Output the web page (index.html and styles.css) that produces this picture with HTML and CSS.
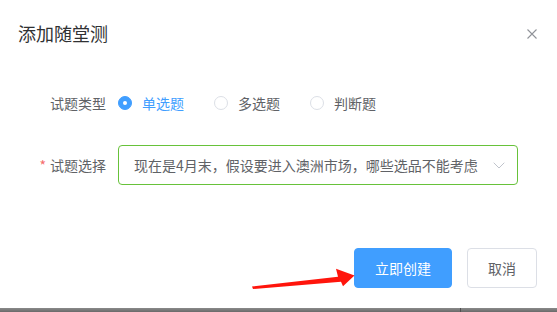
FILE: index.html
```html
<!DOCTYPE html>
<html lang="zh">
<head>
<meta charset="utf-8">
<link rel="stylesheet" href="styles.css">
</head>
<body>
<div class="dialog">
  <div class="header">
    <span class="title">添加随堂测</span>
    <svg class="close" width="10" height="10" viewBox="0 0 10 10"><path d="M0.5 0.5 L9.5 9.5 M9.5 0.5 L0.5 9.5" stroke="#909399" stroke-width="1.1" fill="none"/></svg>
  </div>
  <div class="form">
    <div class="form-item">
      <label class="label">试题类型</label>
      <div class="radios">
        <span class="radio checked"><span class="circle"></span><span class="rtext">单选题</span></span>
        <span class="radio"><span class="circle"></span><span class="rtext">多选题</span></span>
        <span class="radio"><span class="circle"></span><span class="rtext">判断题</span></span>
      </div>
    </div>
    <div class="form-item">
      <label class="label"><span class="req">*</span>试题选择</label>
      <div class="select">
        <span class="value">现在是4月末，假设要进入澳洲市场，哪些选品不能考虑</span>
        <svg class="chev" width="12" height="7" viewBox="0 0 12 7"><path d="M0.7 0.7 L6 6 L11.3 0.7" stroke="#C0C4CC" stroke-width="1" fill="none"/></svg>
      </div>
    </div>
  </div>
  <div class="footer">
    <button class="btn primary">立即创建</button>
    <button class="btn">取消</button>
  </div>
  <div class="strip"><span class="strip-a"></span><span class="strip-div"></span><span class="strip-b"></span></div>
</div>
<svg class="arrow" width="557" height="312" viewBox="0 0 557 312"><polygon points="252,286.5 338,276.8 336,268.8 354.5,275.5 343,286.2 341,281.8 253,289" fill="#FF150C"/></svg>
</body>
</html>
```

FILE: styles.css
```css
html, body {
  margin: 0;
  padding: 0;
}
body {
  width: 557px;
  height: 312px;
  overflow: hidden;
  background: #fff;
  position: relative;
  font-family: "Noto Sans CJK SC", "Noto Sans", sans-serif;
}
.dialog {
  height: 312px;
  display: flex;
  flex-direction: column;
}
.header {
  display: flex;
  justify-content: space-between;
  align-items: center;
  padding: 21px 20px 0 18px;
  height: 24px;
}
.title {
  font-size: 18px;
  line-height: 24px;
  color: #303133;
}
.close {
  display: block;
  margin-top: 1px;
}
.form {
  padding: 38px 18px 0 18px;
}
.form-item {
  display: flex;
  align-items: center;
  height: 40px;
  margin-bottom: 22px;
}
.label {
  width: 100px;
  box-sizing: border-box;
  padding-right: 12px;
  text-align: right;
  font-size: 14px;
  color: #606266;
}
.req {
  color: #F56C6C;
  margin-right: 4px;
}
.radios {
  display: flex;
  align-items: center;
}
.radio {
  display: flex;
  align-items: center;
  margin-right: 30px;
  font-size: 14px;
  color: #606266;
}
.circle {
  width: 14px;
  height: 14px;
  box-sizing: border-box;
  border: 1px solid #DCDFE6;
  border-radius: 50%;
  background: #fff;
  position: relative;
}
.radio.checked .circle {
  background: #409EFF;
  border-color: #409EFF;
}
.radio.checked .circle::after {
  content: "";
  position: absolute;
  left: 50%;
  top: 50%;
  width: 4px;
  height: 4px;
  margin: -2px 0 0 -2px;
  border-radius: 50%;
  background: #fff;
}
.rtext {
  padding-left: 10px;
}
.radio.checked .rtext {
  color: #409EFF;
}
.select {
  width: 400px;
  height: 40px;
  box-sizing: border-box;
  border: 1px solid #67C23A;
  border-radius: 4px;
  padding: 0 12px 0 15px;
  display: flex;
  align-items: center;
  justify-content: space-between;
}
.value {
  font-size: 14px;
  color: #606266;
  white-space: nowrap;
  overflow: hidden;
}
.chev {
  display: block;
  margin-left: 12px;
  flex: none;
}
.footer {
  display: flex;
  justify-content: flex-end;
  gap: 15px;
  padding: 41px 20px 0 0;
}
.btn {
  height: 40px;
  padding: 0 20px;
  border: 1px solid #DCDFE6;
  border-radius: 4px;
  background: #fff;
  color: #606266;
  font-family: "Noto Sans CJK SC", "Noto Sans", sans-serif;
  font-size: 14px;
}
.btn.primary {
  background: #409EFF;
  border-color: #409EFF;
  color: #fff;
}
.strip {
  margin-top: auto;
  height: 4px;
  display: flex;
}
.strip-a, .strip-b {
  background: linear-gradient(#8a8a8a, #6a6a6a);
}
.strip-a {
  width: 460px;
}
.strip-div {
  width: 1px;
  background: #505050;
}
.strip-b {
  flex: 1;
}
.arrow {
  position: absolute;
  left: 0;
  top: 0;
  pointer-events: none;
}
```
